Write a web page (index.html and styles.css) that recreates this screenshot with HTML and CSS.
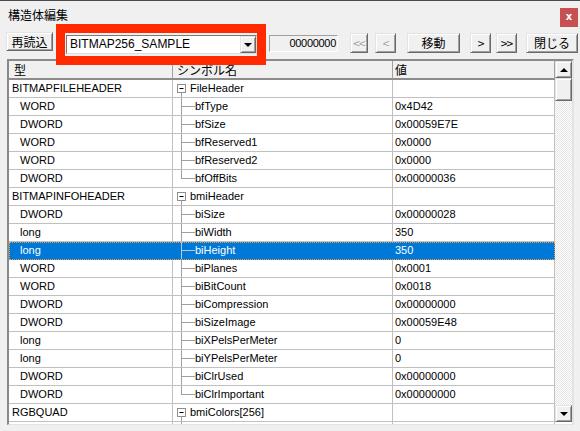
FILE: index.html
```html
<!DOCTYPE html>
<html lang="ja">
<head>
<meta charset="utf-8">
<title>構造体編集</title>
<link rel="stylesheet" href="styles.css">
</head>
<body>
<div class="window">
  <div class="titlebar">
    <span class="title jp">構造体編集</span>
    <span class="close">x</span>
  </div>

  <div class="toolbar">
    <button class="btn raised b-reload jp">再読込</button>
    <div class="combo">
      <span class="combo-text">BITMAP256_SAMPLE</span>
      <span class="combo-btn raised"><span class="tri-down"></span></span>
    </div>
    <div class="counter">00000000</div>
    <button class="btn raised b-first disabled">&lt;&lt;</button>
    <button class="btn raised b-prev disabled">&lt;</button>
    <button class="btn raised b-move jp">移動</button>
    <button class="btn raised b-next">&gt;</button>
    <button class="btn raised b-last">&gt;&gt;</button>
    <button class="btn raised b-close jp">閉じる</button>
  </div>

  <div class="grid">
    <div class="table">
      <div class="row header">
        <div class="cell h-type jp">型</div>
        <div class="cell h-sym jp">シンボル名</div>
        <div class="cell h-val jp">値</div>
      </div>

      <div class="row">
        <div class="cell c-type">BITMAPFILEHEADER</div>
        <div class="cell c-sym"><svg class="tbox" width="17" height="17" viewBox="0 0 17 17"><rect x="4.5" y="4.5" width="8" height="8" fill="#fff" stroke="#8e8e8e"/><path d="M6.5 8.5h4" stroke="#000"/><path d="M8.5 13v4" stroke="#a0a0a0"/></svg>FileHeader</div>
        <div class="cell c-val"></div>
      </div>
      <div class="row">
        <div class="cell c-type sub">WORD</div>
        <div class="cell c-sym leaf">bfType</div>
        <div class="cell c-val">0x4D42</div>
      </div>
      <div class="row">
        <div class="cell c-type sub">DWORD</div>
        <div class="cell c-sym leaf">bfSize</div>
        <div class="cell c-val">0x00059E7E</div>
      </div>
      <div class="row">
        <div class="cell c-type sub">WORD</div>
        <div class="cell c-sym leaf">bfReserved1</div>
        <div class="cell c-val">0x0000</div>
      </div>
      <div class="row">
        <div class="cell c-type sub">WORD</div>
        <div class="cell c-sym leaf">bfReserved2</div>
        <div class="cell c-val">0x0000</div>
      </div>
      <div class="row">
        <div class="cell c-type sub">DWORD</div>
        <div class="cell c-sym leaf last">bfOffBits</div>
        <div class="cell c-val">0x00000036</div>
      </div>
      <div class="row">
        <div class="cell c-type">BITMAPINFOHEADER</div>
        <div class="cell c-sym"><svg class="tbox" width="17" height="17" viewBox="0 0 17 17"><rect x="4.5" y="4.5" width="8" height="8" fill="#fff" stroke="#8e8e8e"/><path d="M6.5 8.5h4" stroke="#000"/><path d="M8.5 13v4" stroke="#a0a0a0"/></svg>bmiHeader</div>
        <div class="cell c-val"></div>
      </div>
      <div class="row">
        <div class="cell c-type sub">DWORD</div>
        <div class="cell c-sym leaf">biSize</div>
        <div class="cell c-val">0x00000028</div>
      </div>
      <div class="row">
        <div class="cell c-type sub">long</div>
        <div class="cell c-sym leaf">biWidth</div>
        <div class="cell c-val">350</div>
      </div>
      <div class="row selected">
        <div class="cell c-type sub">long</div>
        <div class="cell c-sym leaf">biHeight</div>
        <div class="cell c-val">350</div>
      </div>
      <div class="row">
        <div class="cell c-type sub">WORD</div>
        <div class="cell c-sym leaf">biPlanes</div>
        <div class="cell c-val">0x0001</div>
      </div>
      <div class="row">
        <div class="cell c-type sub">WORD</div>
        <div class="cell c-sym leaf">biBitCount</div>
        <div class="cell c-val">0x0018</div>
      </div>
      <div class="row">
        <div class="cell c-type sub">DWORD</div>
        <div class="cell c-sym leaf">biCompression</div>
        <div class="cell c-val">0x00000000</div>
      </div>
      <div class="row">
        <div class="cell c-type sub">DWORD</div>
        <div class="cell c-sym leaf">biSizeImage</div>
        <div class="cell c-val">0x00059E48</div>
      </div>
      <div class="row">
        <div class="cell c-type sub">long</div>
        <div class="cell c-sym leaf">biXPelsPerMeter</div>
        <div class="cell c-val">0</div>
      </div>
      <div class="row">
        <div class="cell c-type sub">long</div>
        <div class="cell c-sym leaf">biYPelsPerMeter</div>
        <div class="cell c-val">0</div>
      </div>
      <div class="row">
        <div class="cell c-type sub">DWORD</div>
        <div class="cell c-sym leaf">biClrUsed</div>
        <div class="cell c-val">0x00000000</div>
      </div>
      <div class="row">
        <div class="cell c-type sub">DWORD</div>
        <div class="cell c-sym leaf last">biClrImportant</div>
        <div class="cell c-val">0x00000000</div>
      </div>
      <div class="row">
        <div class="cell c-type">RGBQUAD</div>
        <div class="cell c-sym"><svg class="tbox" width="17" height="17" viewBox="0 0 17 17"><rect x="4.5" y="4.5" width="8" height="8" fill="#fff" stroke="#8e8e8e"/><path d="M6.5 8.5h4" stroke="#000"/><path d="M8.5 13v4" stroke="#a0a0a0"/></svg>bmiColors[256]</div>
        <div class="cell c-val"></div>
      </div>
      <div class="row">
        <div class="cell c-type sub"></div>
        <div class="cell c-sym leaf nested"><svg class="tbox" width="17" height="17" viewBox="0 0 17 17"><rect x="4.5" y="4.5" width="8" height="8" fill="#fff" stroke="#8e8e8e"/><path d="M6.5 8.5h4" stroke="#000"/></svg>[0]</div>
        <div class="cell c-val"></div>
      </div>
    </div>

    <div class="vscroll">
      <div class="sb-btn raised"><span class="tri-up"></span></div>
      <div class="sb-thumb raised"></div>
      <div class="sb-track"></div>
      <div class="sb-btn raised"><span class="tri-down"></span></div>
    </div>
  </div>

  <div class="highlight"></div>
</div>
</body>
</html>
```

FILE: styles.css
```css
html, body {
  margin: 0;
  padding: 0;
}

body {
  background: #f0f0f0;
  font-family: "Liberation Sans", "Noto Sans CJK JP", sans-serif;
  font-size: 11px;
  color: #000;
}

.jp {
  font-family: "Noto Sans CJK JP", "Liberation Sans", sans-serif;
  font-size: 12px;
}

.window {
  position: relative;
  width: 580px;
  height: 431px;
  overflow: hidden;
  box-sizing: border-box;
  border-top: 1px solid #4a4a4a;
  background: #f0f0f0;
}

/* ---------- title bar ---------- */
.titlebar {
  display: flex;
  justify-content: space-between;
  align-items: flex-start;
  height: 31px;
  padding: 6px 2px 0 8px;
  box-sizing: border-box;
}

.title {
  line-height: 16px;
  color: #000;
}

.close {
  margin-top: 1px;
  width: 18px;
  height: 19px;
  background: #c75050;
  color: #fff;
  font-family: "DejaVu Sans", sans-serif;
  font-weight: bold;
  font-size: 10px;
  line-height: 18px;
  text-align: center;
}

/* ---------- toolbar ---------- */
.toolbar {
  display: flex;
  align-items: flex-start;
  height: 21px;
  padding-left: 6px;
}

.raised {
  background: #f0f0f0;
  border: 1px solid;
  border-color: #e3e3e3 #696969 #696969 #e3e3e3;
  box-shadow: inset 1px 1px #fff, inset -1px -1px #a0a0a0;
  box-sizing: border-box;
}

.btn {
  margin: 1px 0 0;
  padding: 0;
  height: 20px;
  color: #000;
  font-size: 12px;
  line-height: 16px;
  text-align: center;
  cursor: default;
}

.btn.disabled {
  color: #a0a0a0;
  text-shadow: 1px 1px #fff;
}

.b-first, .b-prev, .b-next, .b-last {
  font-family: "Noto Sans CJK JP", sans-serif;
  font-size: 12px;
  letter-spacing: -1px;
}

.b-reload { margin-top: 0; width: 47px; height: 19px; line-height: 15px; }
.b-first  { margin-left: 12px; width: 18px; }
.b-prev   { margin-left: 7px;  width: 21px; }
.b-move   { margin-left: 11px; width: 53px; }
.b-next   { margin-left: 10px; width: 21px; }
.b-last   { margin-left: 5px;  width: 21px; }
.b-close  { margin-left: 9px;  width: 52px; }

.combo {
  display: flex;
  align-items: stretch;
  margin: 3px 0 0 13px;
  width: 191px;
  height: 19px;
  box-sizing: border-box;
  background: #fff;
  border: 1px solid;
  border-color: #7a7a7a #dcdcdc #dcdcdc #7a7a7a;
}

.combo-text {
  flex: 1;
  padding-left: 3px;
  font-size: 12px;
  line-height: 17px;
}

.combo-btn {
  width: 16px;
  display: flex;
  align-items: center;
  justify-content: center;
}

.tri-down {
  width: 0;
  height: 0;
  border-left: 4px solid transparent;
  border-right: 4px solid transparent;
  border-top: 4px solid #000;
}

.tri-up {
  width: 0;
  height: 0;
  border-left: 4px solid transparent;
  border-right: 4px solid transparent;
  border-bottom: 4px solid #000;
}

.counter {
  margin: 3px 0 0 12px;
  width: 69px;
  height: 17px;
  box-sizing: border-box;
  border: 1px solid;
  border-color: #a0a0a0 #fff #fff #a0a0a0;
  background: #f0f0f0;
  text-align: right;
  padding-right: 1px;
  font-size: 11px;
  line-height: 15px;
  letter-spacing: -0.3px;
}

/* ---------- grid ---------- */
.grid {
  display: flex;
  margin: 6px 0 0 7px;
  width: 567px;
  height: 366px;
  box-sizing: border-box;
  border: 2px solid;
  border-color: #8a8a8a #e3e3e3 #e3e3e3 #8a8a8a;
  border-bottom-width: 1px;
  background: #fff;
}

.table {
  width: 546px;
  overflow: hidden;
}

.row {
  display: grid;
  grid-template-columns: 164px 220px 162px;
  height: 18px;
}

.cell {
  box-sizing: border-box;
  border-right: 1px solid #c0c0c0;
  border-bottom: 1px solid #c0c0c0;
  line-height: 17px;
  white-space: nowrap;
  overflow: hidden;
}

.header {
  height: 19px;
}

.header .cell {
  background: #f0f0f0;
  border-bottom: 2px solid #8c8c8c;
  border-right-color: #a0a0a0;
  line-height: 17px;
}

.h-type { padding-left: 5px; }
.h-sym  { padding-left: 4px; }
.h-val  { padding-left: 2px; }

.c-type { padding-left: 3px; }
.c-type.sub { padding-left: 11px; }
.c-val { padding-left: 2px; }

.tbox {
  display: inline-block;
  vertical-align: top;
}

.leaf::before {
  content: "";
  display: inline-block;
  vertical-align: top;
  width: 22px;
  height: 17px;
  background:
    linear-gradient(var(--tree, #a0a0a0), var(--tree, #a0a0a0)) 8px 0 / 1px 17px no-repeat,
    linear-gradient(var(--tree, #a0a0a0), var(--tree, #a0a0a0)) 8px 8px / 14px 1px no-repeat;
}

.leaf.last::before {
  background:
    linear-gradient(var(--tree, #a0a0a0), var(--tree, #a0a0a0)) 8px 0 / 1px 9px no-repeat,
    linear-gradient(var(--tree, #a0a0a0), var(--tree, #a0a0a0)) 8px 8px / 14px 1px no-repeat;
}

.leaf.nested::before {
  width: 23px;
  background:
    linear-gradient(var(--tree, #a0a0a0), var(--tree, #a0a0a0)) 8px 0 / 1px 17px no-repeat;
}

.row.selected {
  background: #0078d7;
  color: #fff;
  outline: 1px dotted #f59a45;
  outline-offset: -1px;
  --tree: #b8c8d8;
}

.row.selected .cell {
  border-color: #0078d7;
}

/* ---------- scrollbar ---------- */
.vscroll {
  width: 17px;
  height: 361px;
  display: flex;
  flex-direction: column;
  background: repeating-conic-gradient(#ffffff 0 25%, #e4e4e4 0 50%) 0 0 / 2px 2px;
}

.sb-btn {
  height: 17px;
  display: flex;
  align-items: center;
  justify-content: center;
}

.sb-thumb {
  height: 23px;
}

.sb-track {
  flex: 1;
}

/* ---------- annotation overlay ---------- */
.highlight {
  position: absolute;
  left: 56px;
  top: 23px;
  width: 210px;
  height: 41px;
  box-sizing: border-box;
  border: 9px solid #ff2a00;
}
```
